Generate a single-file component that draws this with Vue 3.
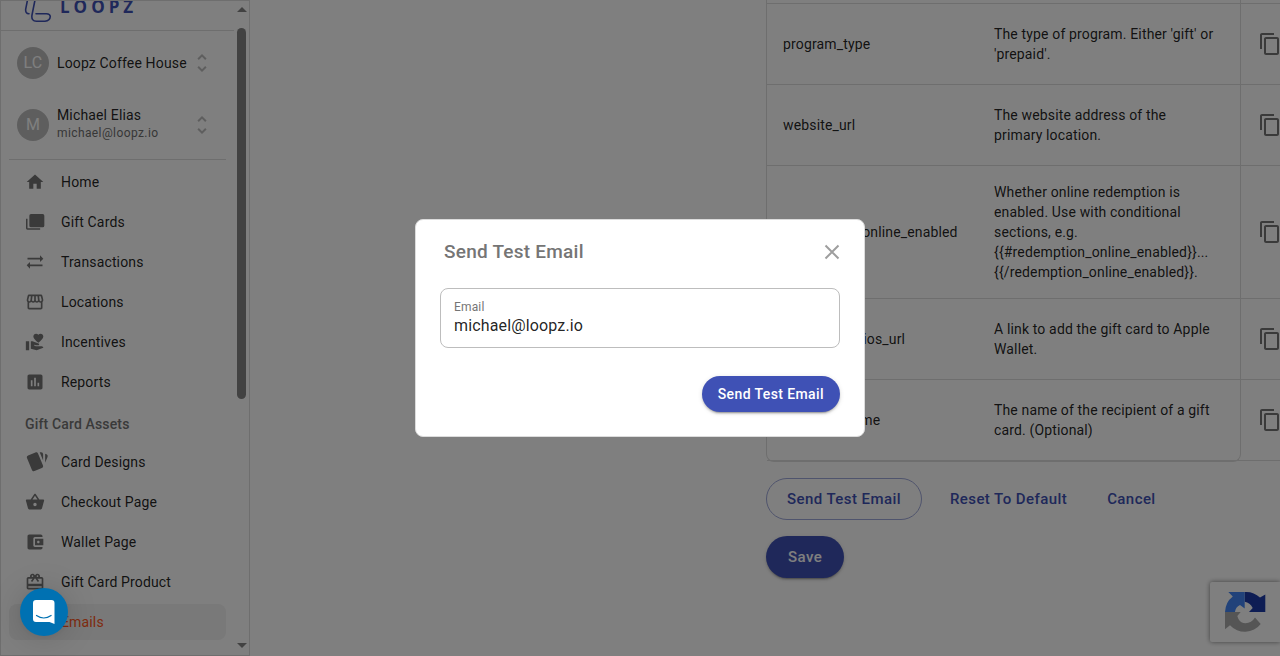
<script setup>
import { ref } from 'vue'

const email = ref('michael@loopz.io')

const paths = {
  home: 'M10 20v-6h4v6h5v-8h3L12 3 2 12h3v8z',
  cards: 'M7.2 2.4h14a2 2 0 0 1 2 2v12a2 2 0 0 1-2 2h-14a2 2 0 0 1-2-2v-12a2 2 0 0 1 2-2zM1.2 8.2H3v11.3h15.2v1.8H2.9a1.7 1.7 0 0 1-1.7-1.7z',
  swap: 'M22 8l-4-4v3H3v2h15v3l4-4zM2 16l4 4v-3h15v-2H6v-3l-4 4z',
  store: 'M21.9 8.89l-1.05-4.37c-.22-.9-1-1.52-1.91-1.52H5.05c-.9 0-1.69.63-1.9 1.52L2.1 8.89c-.24 1.02-.02 2.06.62 2.88.08.11.19.19.28.29V19c0 1.1.9 2 2 2h14c1.1 0 2-.9 2-2v-6.94c.09-.09.2-.18.28-.28.64-.82.87-1.87.62-2.89zM18.91 4.99l1.05 4.37c.1.42.01.84-.25 1.17-.14.18-.44.47-.94.47-.61 0-1.14-.49-1.21-1.14L16.98 5l1.93-.01zM13 5h1.96l.54 4.52c.05.39-.07.78-.33 1.07-.22.26-.54.41-.95.41-.67 0-1.22-.59-1.22-1.31V5zM8.49 9.52L9.04 5H11v4.69c0 .72-.55 1.31-1.29 1.31-.34 0-.65-.15-.89-.41-.25-.29-.37-.68-.33-1.07zM4.04 9.37L5.05 5h1.97l-.58 4.86c-.08.65-.6 1.14-1.21 1.14-.49 0-.8-.29-.93-.47-.27-.32-.36-.75-.26-1.16zM5 19v-6.03c.08.01.15.03.23.03.87 0 1.66-.36 2.24-.95.6.6 1.4.95 2.31.95.87 0 1.65-.36 2.23-.93.59.57 1.39.93 2.29.93.84 0 1.64-.35 2.24-.95.58.59 1.37.95 2.24.95.08 0 .15-.02.23-.03V19H5z',
  heart: 'M1 11h4v11H1zM16 3.25C16.65 2.49 17.66 2 18.7 2 20.55 2 22 3.45 22 5.3c0 2.27-2.91 4.9-6 7.7-3.09-2.81-6-5.44-6-7.7C10 3.45 11.45 2 13.3 2c1.04 0 2.05.49 2.7 1.25zM20 17h-7l-2.09-.73.33-.94L13 16h2.82c.65 0 1.18-.53 1.18-1.18 0-.49-.31-.93-.77-1.11L8.97 11H7v9.02L14 22l8.01-3c-.01-1.1-.9-2-2.01-2z',
  chart: 'M19 3H5c-1.1 0-2 .9-2 2v14c0 1.1.9 2 2 2h14c1.1 0 2-.9 2-2V5c0-1.1-.9-2-2-2zM9 17H7v-7h2v7zm4 0h-2V7h2v10zm4 0h-2v-4h2v4z',
  deck: 'M21.47,4.35L20.13,3.79V12.82L22.56,6.96C22.97,5.94 22.5,4.77 21.47,4.35M1.97,8.05L6.93,20C7.24,20.77 7.97,21.24 8.74,21.26C9,21.26 9.27,21.21 9.53,21.1L16.9,18.05C17.65,17.74 18.11,17 18.13,16.26C18.14,16 18.09,15.71 18,15.45L13,3.5C12.71,2.73 11.97,2.26 11.19,2.25C10.93,2.25 10.67,2.31 10.42,2.4L3.06,5.45C2.04,5.87 1.55,7.04 1.97,8.05M18.12,4.25A2,2 0 0,0 16.12,2.25H14.67L18.12,10.59',
  basket: 'M17.21 9l-4.38-6.56c-.19-.28-.51-.42-.83-.42-.32 0-.64.14-.83.43L6.79 9H2c-.55 0-1 .45-1 1 0 .09.01.18.04.27l2.54 9.27c.23.84 1 1.46 1.92 1.46h13c.92 0 1.69-.62 1.93-1.46l2.54-9.27L23 10c0-.55-.45-1-1-1h-4.79zM9 9l3-4.4L15 9H9zm3 8c-1.1 0-2-.9-2-2s.9-2 2-2 2 .9 2 2-.9 2-2 2z',
  wallet: 'M21 18v1c0 1.1-.9 2-2 2H5c-1.11 0-2-.9-2-2V5c0-1.1.89-2 2-2h14c1.1 0 2 .9 2 2v1h-9c-1.11 0-2 .9-2 2v8c0 1.1.89 2 2 2h9zm-9-2h10V8H12v8zm4-2.5c-.83 0-1.5-.67-1.5-1.5s.67-1.5 1.5-1.5 1.5.67 1.5 1.5-.67 1.5-1.5 1.5z',
  gift: 'M20 6h-2.18c.11-.31.18-.65.18-1 0-1.66-1.34-3-3-3-1.05 0-1.96.54-2.5 1.35l-.5.67-.5-.68C10.96 2.54 10.05 2 9 2 7.34 2 6 3.34 6 5c0 .35.07.69.18 1H4c-1.11 0-1.99.89-1.99 2L2 19c0 1.11.89 2 2 2h16c1.11 0 2-.89 2-2V8c0-1.11-.89-2-2-2zm-5-2c.55 0 1 .45 1 1s-.45 1-1 1-1-.45-1-1 .45-1 1-1zM9 4c.55 0 1 .45 1 1s-.45 1-1 1-1-.45-1-1 .45-1 1-1zm11 15H4v-2h16v2zm0-5H4V8h5.08L7 10.83 8.62 12 11 8.76l1-1.36 1 1.36L15.38 12 17 10.83 14.92 8H20v6z',
  mail: 'M20 4H4c-1.1 0-2 .9-2 2v12c0 1.1.9 2 2 2h16c1.1 0 2-.9 2-2V6c0-1.1-.9-2-2-2zm0 4l-8 5-8-5V6l8 5 8-5v2z',
  unfold: 'M12 5.83L15.17 9l1.41-1.41L12 3 7.41 7.59 8.83 9 12 5.83zm0 12.34L8.83 15l-1.41 1.41L12 21l4.59-4.59L15.17 15 12 18.17z',
  copy: 'M16 1H4c-1.1 0-2 .9-2 2v14h2V3h12V1zm3 4H8c-1.1 0-2 .9-2 2v14c0 1.1.9 2 2 2h11c1.1 0 2-.9 2-2V7c0-1.1-.9-2-2-2zm0 16H8V7h11v14z',
}

const mainNav = [
  { label: 'Home', icon: 'home' },
  { label: 'Gift Cards', icon: 'cards' },
  { label: 'Transactions', icon: 'swap' },
  { label: 'Locations', icon: 'store' },
  { label: 'Incentives', icon: 'heart' },
  { label: 'Reports', icon: 'chart' },
]

const assetNav = [
  { label: 'Card Designs', icon: 'deck', large: true },
  { label: 'Checkout Page', icon: 'basket' },
  { label: 'Wallet Page', icon: 'wallet' },
  { label: 'Gift Card Product', icon: 'gift' },
  { label: 'Emails', icon: 'mail', active: true },
]

const variables = [
  { name: 'program_type', text: "The type of program. Either 'gift' or 'prepaid'." },
  { name: 'website_url', text: 'The website address of the primary location.' },
  {
    name: 'redemption_online_enabled',
    text: 'Whether online redemption is enabled. Use with conditional sections, e.g. {{#redemption_online_enabled}}... {{/redemption_online_enabled}}.',
  },
  { name: 'save_wallet_ios_url', text: 'A link to add the gift card to Apple Wallet.' },
  { name: 'recipient_name', text: 'The name of the recipient of a gift card. (Optional)' },
]
</script>

<template>
  <div class="shell">
    <aside class="sidebar">
      <div class="side-content">
        <header class="brand">
          <svg class="brand-mark" width="28" height="24" viewBox="0 0 28 24" fill="none" stroke="currentColor" stroke-width="1.6" stroke-linecap="round">
            <path d="M3.5 -1 1.7 8Q1.2 12.5 5 12.7" />
            <path d="M11 -1 8 14Q7 20.2 12.5 20.2H21Q26 19.7 26.3 15.5 26 12.7 22.5 12.7H12" />
          </svg>
          <span class="brand-name">LOOPZ</span>
        </header>

        <button type="button" class="account">
          <span class="avatar">LC</span>
          <span class="who"><span class="who-name">Loopz Coffee House</span></span>
          <svg class="unfold" width="24" height="24" viewBox="0 0 24 24"><path :d="paths.unfold" /></svg>
        </button>
        <button type="button" class="account">
          <span class="avatar">M</span>
          <span class="who">
            <span class="who-name">Michael Elias</span>
            <span class="who-mail">michael@loopz.io</span>
          </span>
          <svg class="unfold" width="24" height="24" viewBox="0 0 24 24"><path :d="paths.unfold" /></svg>
        </button>

        <nav class="nav">
          <a v-for="item in mainNav" :key="item.label" href="#" class="nav-item">
            <svg class="nav-icon" viewBox="0 0 24 24"><path :d="paths[item.icon]" /></svg>
            <span>{{ item.label }}</span>
          </a>
          <h2 class="nav-heading">Gift Card Assets</h2>
          <a
            v-for="item in assetNav"
            :key="item.label"
            href="#"
            class="nav-item"
            :class="{ active: item.active }"
          >
            <svg class="nav-icon" :class="{ large: item.large }" viewBox="0 0 24 24"><path :d="paths[item.icon]" /></svg>
            <span>{{ item.label }}</span>
          </a>
        </nav>
      </div>
      <div class="scrollbar" aria-hidden="true">
        <span class="arrow up"></span>
        <span class="track"><span class="thumb"></span></span>
        <span class="arrow down"></span>
      </div>
    </aside>

    <main class="main">
      <section class="editor">
        <div class="table-frame">
          <table class="variables">
            <tbody>
              <tr v-for="row in variables" :key="row.name">
                <td class="var-name">{{ row.name }}</td>
                <td class="var-text">{{ row.text }}</td>
                <td>
                  <button type="button" class="copy" :aria-label="'Copy ' + row.name">
                    <svg width="24" height="24" viewBox="0 0 24 24"><path :d="paths.copy" /></svg>
                  </button>
                </td>
              </tr>
            </tbody>
          </table>
        </div>
        <div class="actions">
          <button type="button" class="btn outlined">Send Test Email</button>
          <button type="button" class="btn plain">Reset To Default</button>
          <button type="button" class="btn plain">Cancel</button>
          <button type="button" class="btn filled">Save</button>
        </div>
      </section>
    </main>

    <div class="captcha">
      <svg width="42" height="42" viewBox="0 0 42 42">
        <path fill="#1c3aa9" d="M20.7 1A20 20 0 0 1 36 6.5L41.3 3.5V21H25l3.7-4Q26 11.5 20.7 10.7z" />
        <path fill="#4285f4" d="M20.7 1H4.3l4.5 4.5Q1.5 11 1 21H11Q11.5 16 16 14l4.7 3.5z" />
        <path fill="#ababab" d="M1 21H16.7l-3.4 4Q15 31 19.5 32 27 33 31 26.5L36.7 33A20 20 0 0 1 6 34.3L1 38.3z" />
      </svg>
    </div>

    <div class="backdrop">
      <form class="dialog" role="dialog" aria-labelledby="dialog-title" @submit.prevent>
        <header class="dialog-head">
          <h1 id="dialog-title">Send Test Email</h1>
          <button type="button" class="close" aria-label="Close">
            <svg width="16" height="16" viewBox="0 0 16 16" fill="none" stroke="currentColor" stroke-width="2"><path d="M1.5 1.5l13 13M14.5 1.5l-13 13" /></svg>
          </button>
        </header>
        <div class="field">
          <label for="email">Email</label>
          <input id="email" v-model="email" type="email" />
        </div>
        <div class="dialog-actions">
          <button type="submit" class="btn filled compact">Send Test Email</button>
        </div>
      </form>
    </div>

    <button type="button" class="chat" aria-label="Open chat">
      <svg width="24" height="26" viewBox="0 0 24 26">
        <path fill="#fff" d="M4 1h15.5a3 3 0 0 1 3 3v21l-5-2H4a3 3 0 0 1-3-3V4a3 3 0 0 1 3-3z" />
        <path fill="none" stroke="#0071b2" stroke-width="1.2" stroke-linecap="round" d="M4.5 16.5q7.3 5 14.6 0" />
      </svg>
    </button>
  </div>
</template>

<style>
body {
  margin: 0;
  background: #fff;
}
</style>

<style scoped>
* {
  box-sizing: border-box;
}

.shell {
  display: flex;
  height: 100vh;
  overflow: hidden;
  font-family: Roboto, "Liberation Sans", sans-serif;
  font-size: 14px;
  line-height: 20px;
  letter-spacing: 0.01071em;
  color: rgba(0, 0, 0, 0.87);
}

button,
input {
  font: inherit;
  letter-spacing: inherit;
  color: inherit;
  background: none;
  border: 0;
  padding: 0;
  margin: 0;
}

button {
  cursor: pointer;
}

svg {
  display: block;
  flex: none;
}

.sidebar {
  display: flex;
  flex: none;
  width: 250px;
  border: 1px solid #dcdcdc;
}

.side-content {
  flex: 1;
  min-width: 0;
  overflow: hidden;
}

.brand {
  display: flex;
  gap: 8px;
  height: 30px;
  padding-left: 23px;
  border-bottom: 1px solid #dcdcdc;
  color: #3f51b5;
}

.brand-name {
  font-family: "Open Sans", sans-serif;
  font-size: 17px;
  line-height: 12px;
  font-weight: 700;
  letter-spacing: 4px;
}

.account {
  display: flex;
  align-items: center;
  width: 100%;
  height: 64px;
  padding: 0 20px 0 16px;
  text-align: left;
}

.account + .account {
  height: 60px;
}

.avatar {
  display: grid;
  place-items: center;
  flex: none;
  width: 32px;
  height: 32px;
  margin-right: 8px;
  border-radius: 50%;
  background: #bdbdbd;
  color: #fff;
  font-size: 16px;
}

.who {
  display: flex;
  flex: 1;
  flex-direction: column;
  min-width: 0;
  white-space: nowrap;
}

.who-name {
  line-height: 20px;
}

.who-mail {
  margin-bottom: 4px;
  font-size: 12px;
  line-height: 16px;
  letter-spacing: 0.0333em;
  color: #6f6f6f;
}

.unfold {
  fill: #bdbdbd;
}

.nav {
  display: flex;
  flex-direction: column;
  gap: 4px;
  margin: 4px 8px 0;
  padding-top: 4px;
  border-top: 1px solid #dcdcdc;
}

.nav-item {
  display: flex;
  align-items: center;
  height: 36px;
  padding-left: 16px;
  border-radius: 8px;
  color: inherit;
  text-decoration: none;
}

.nav-item.active {
  background: #f2f2f2;
  color: #ff5722;
}

.nav-icon {
  width: 20px;
  height: 20px;
  margin-right: 16px;
  fill: #757575;
}

.nav-icon.large {
  width: 24px;
  height: 24px;
  margin-right: 12px;
}

.nav-heading {
  margin: 0;
  padding: 4px 0 0 16px;
  font-size: 14px;
  line-height: 32px;
  font-weight: 500;
  color: #757575;
}

.scrollbar {
  display: flex;
  flex-direction: column;
  align-items: center;
  flex: none;
  width: 15px;
  padding: 6px 0 7px;
}

.arrow {
  border: 5px solid transparent;
}

.arrow.up {
  border-top-width: 0;
  border-bottom-color: #858585;
}

.arrow.down {
  border-bottom-width: 0;
  border-top-color: #858585;
}

.track {
  flex: 1;
  width: 9px;
  padding: 16px 0;
}

.thumb {
  display: block;
  height: 62%;
  border-radius: 5px;
  background: #858585;
}

.main {
  display: grid;
  flex: 1;
  grid-template-columns: 1fr 1fr;
  gap: 2px;
  min-width: 0;
  padding: 0 39px;
}

.editor {
  grid-column: 2;
  min-width: 0;
}

.table-frame {
  padding-top: 3px;
  border: 1px solid #dcdcdc;
  border-top: 0;
  border-radius: 0 0 8px 8px;
}

.variables {
  width: 543px;
  table-layout: fixed;
  border-spacing: 0;
  border-top: 1px solid #dcdcdc;
}

.variables td {
  height: 81px;
  padding: 16px;
  border-bottom: 1px solid #dcdcdc;
  vertical-align: middle;
}

.variables .var-name {
  width: 211px;
  padding-right: 0;
}

.variables .var-text {
  width: 252px;
}

.copy {
  display: grid;
  place-items: center;
  width: 48px;
  height: 48px;
  fill: #757575;
}

.actions {
  display: flex;
  flex-wrap: wrap;
  gap: 16px;
  margin-top: 16px;
}

.btn {
  height: 42px;
  padding: 0 21px;
  border: 1px solid transparent;
  border-radius: 21px;
  font-size: 15px;
  font-weight: 500;
  letter-spacing: 0.02857em;
  color: #3f51b5;
  white-space: nowrap;
}

.btn.outlined {
  padding: 0 20px;
  border-color: #9fa8da;
}

.btn.plain {
  padding: 0 11px;
}

.btn.filled {
  background: #3f51b5;
  color: #fff;
  box-shadow: 0 3px 1px -2px rgba(0, 0, 0, 0.2), 0 2px 2px rgba(0, 0, 0, 0.14), 0 1px 5px rgba(0, 0, 0, 0.12);
}

.btn.compact {
  height: 36px;
  padding: 0 15px;
  border-radius: 18px;
  font-size: 14px;
}

.captcha {
  position: fixed;
  right: 0;
  bottom: 14px;
  display: flex;
  align-items: center;
  width: 70px;
  height: 60px;
  padding-left: 14px;
  border-radius: 2px 0 0 2px;
  background: #fff;
  box-shadow: 0 0 5px gray;
}

.backdrop {
  position: fixed;
  inset: 0;
  display: grid;
  place-items: center;
  background: rgba(0, 0, 0, 0.5);
}

.dialog {
  width: 450px;
  padding: 20px 24px 24px;
  border: 1px solid #dcdcdc;
  border-radius: 8px;
  background: #fff;
}

.dialog-head {
  display: flex;
  align-items: center;
  justify-content: space-between;
  padding-left: 4px;
}

.dialog-head h1 {
  margin: 0;
  font-size: 19px;
  line-height: 24px;
  font-weight: 500;
  letter-spacing: 0.0125em;
  color: #757575;
}

.close {
  color: #9e9e9e;
}

.field {
  display: flex;
  flex-direction: column;
  height: 60px;
  margin: 24px 0 28px;
  padding: 10px 13px;
  border: 1px solid #bdbdbd;
  border-radius: 8px;
}

.field label {
  font-size: 12px;
  line-height: 16px;
  color: #757575;
}

.field input {
  height: 22px;
  font-size: 16px;
  line-height: 22px;
  outline: 0;
}

.dialog-actions {
  display: flex;
  justify-content: flex-end;
}

.chat {
  position: fixed;
  left: 20px;
  bottom: 20px;
  display: grid;
  place-items: center;
  width: 48px;
  height: 48px;
  border-radius: 50%;
  background: #0071b2;
  box-shadow: 0 1px 6px rgba(0, 0, 0, 0.06), 0 2px 32px rgba(0, 0, 0, 0.16);
}
</style>
